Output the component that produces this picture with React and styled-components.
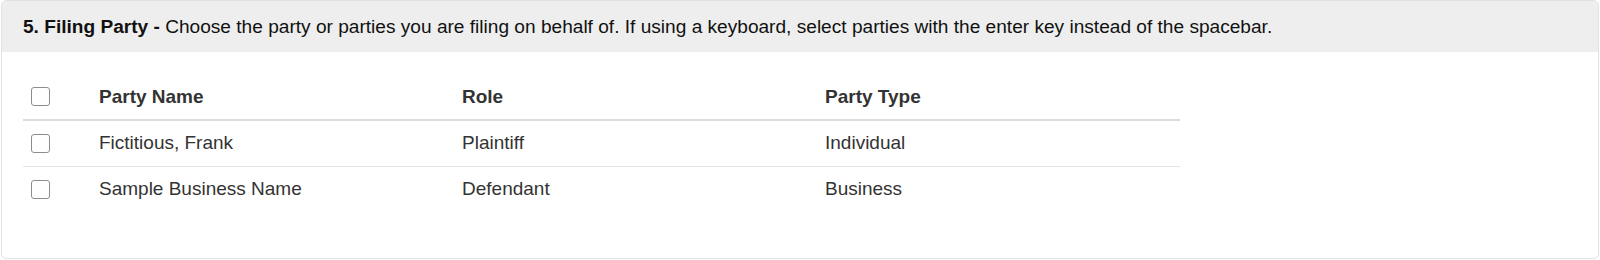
import React from 'react';
import styled, { createGlobalStyle } from 'styled-components';

const GlobalStyle = createGlobalStyle`
  body {
    margin: 0;
    background: #fff;
    font-family: "Liberation Sans", Arial, Helvetica, sans-serif;
  }
`;

const Panel = styled.section`
  margin: 0 1px;
  height: 259px;
  box-sizing: border-box;
  border: 1px solid #e2e2e2;
  border-radius: 5px;
  overflow: hidden;
  background: #fff;
`;

const PanelHeading = styled.div`
  height: 51px;
  box-sizing: border-box;
  padding: 0 21px;
  display: flex;
  align-items: center;
  background: #eeeeee;
  color: #111;
  font-size: 19.1px;
`;

const Step = styled.strong`
  font-weight: bold;
`;

const PanelBody = styled.div`
  padding: 25px 21px 0;
`;

const Table = styled.table`
  width: 1157px;
  border-collapse: collapse;
  table-layout: fixed;
  color: #333;
  font-size: 19px;
`;

const HeadCell = styled.th`
  text-align: left;
  font-weight: bold;
  padding: 8px 8px 11px;
  height: 23px;
  border-bottom: 2px solid #dddddd;
  vertical-align: middle;
  width: ${({ $w }) => $w || 'auto'};
`;

const Row = styled.tr`
  & + & td {
    border-top: 1.5px solid #e4e4e4;
  }
`;

const Cell = styled.td`
  padding: 11px 8px 12px;
  height: 22px;
  vertical-align: middle;
`;

const Box = styled.span`
  display: block;
  width: 19px;
  height: 19px;
  box-sizing: border-box;
  border: 1.5px solid #8d8d8d;
  border-radius: 3px;
  background: #fff;
`;

const parties = [
  { name: 'Fictitious, Frank', role: 'Plaintiff', type: 'Individual' },
  { name: 'Sample Business Name', role: 'Defendant', type: 'Business' },
];

export default function App() {
  return (
    <>
      <GlobalStyle />
      <Panel>
        <PanelHeading>
          <span>
            <Step>5. Filing Party -</Step> Choose the party or parties you are filing on behalf of. If using a keyboard, select parties with the enter key instead of the spacebar.
          </span>
        </PanelHeading>
        <PanelBody>
          <Table>
            <thead>
              <tr>
                <HeadCell $w="52px"><Box role="checkbox" aria-checked="false" /></HeadCell>
                <HeadCell>Party Name</HeadCell>
                <HeadCell>Role</HeadCell>
                <HeadCell>Party Type</HeadCell>
              </tr>
            </thead>
            <tbody>
              {parties.map((p) => (
                <Row key={p.name}>
                  <Cell><Box role="checkbox" aria-checked="false" /></Cell>
                  <Cell>{p.name}</Cell>
                  <Cell>{p.role}</Cell>
                  <Cell>{p.type}</Cell>
                </Row>
              ))}
            </tbody>
          </Table>
        </PanelBody>
      </Panel>
    </>
  );
}
